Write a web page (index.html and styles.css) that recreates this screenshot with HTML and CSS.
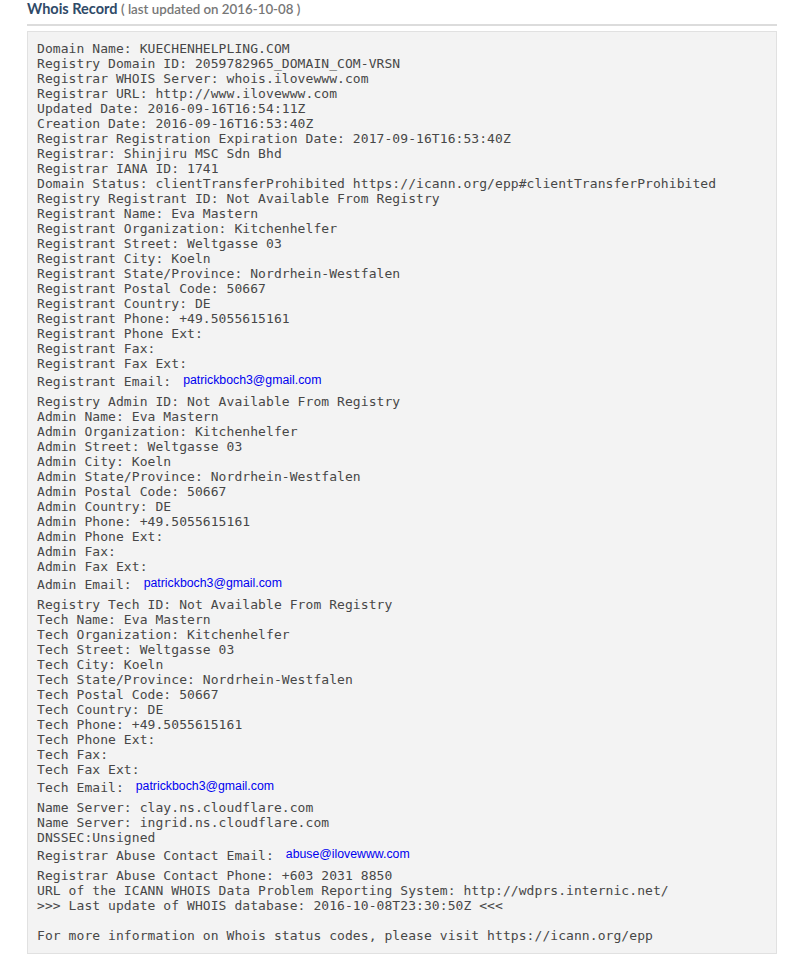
FILE: index.html
```html
<!DOCTYPE html>
<html lang="en">
<head>
  <meta charset="UTF-8">
  <meta name="viewport" content="width=device-width, initial-scale=1.0">
  <title>Whois Record - kuechenhelpling.com</title>
  <link rel="stylesheet" href="styles.css">
</head>
<body>

  <div class="whois-section">
    <h2 class="section-title">Whois Record <small>( last updated on 2016-10-08 )</small></h2>

    <!-- Raw whois output -->
    <pre class="whois-raw">Domain Name: KUECHENHELPLING.COM
Registry Domain ID: 2059782965_DOMAIN_COM-VRSN
Registrar WHOIS Server: whois.ilovewww.com
Registrar URL: http://www.ilovewww.com
Updated Date: 2016-09-16T16:54:11Z
Creation Date: 2016-09-16T16:53:40Z
Registrar Registration Expiration Date: 2017-09-16T16:53:40Z
Registrar: Shinjiru MSC Sdn Bhd
Registrar IANA ID: 1741
Domain Status: clientTransferProhibited https://icann.org/epp#clientTransferProhibited
Registry Registrant ID: Not Available From Registry
Registrant Name: Eva Mastern
Registrant Organization: Kitchenhelfer
Registrant Street: Weltgasse 03
Registrant City: Koeln
Registrant State/Province: Nordrhein-Westfalen
Registrant Postal Code: 50667
Registrant Country: DE
Registrant Phone: +49.5055615161
Registrant Phone Ext:
Registrant Fax:
Registrant Fax Ext:
Registrant Email: <span class="email">patrickboch3@gmail.com</span>
Registry Admin ID: Not Available From Registry
Admin Name: Eva Mastern
Admin Organization: Kitchenhelfer
Admin Street: Weltgasse 03
Admin City: Koeln
Admin State/Province: Nordrhein-Westfalen
Admin Postal Code: 50667
Admin Country: DE
Admin Phone: +49.5055615161
Admin Phone Ext:
Admin Fax:
Admin Fax Ext:
Admin Email: <span class="email">patrickboch3@gmail.com</span>
Registry Tech ID: Not Available From Registry
Tech Name: Eva Mastern
Tech Organization: Kitchenhelfer
Tech Street: Weltgasse 03
Tech City: Koeln
Tech State/Province: Nordrhein-Westfalen
Tech Postal Code: 50667
Tech Country: DE
Tech Phone: +49.5055615161
Tech Phone Ext:
Tech Fax:
Tech Fax Ext:
Tech Email: <span class="email">patrickboch3@gmail.com</span>
Name Server: clay.ns.cloudflare.com
Name Server: ingrid.ns.cloudflare.com
DNSSEC:Unsigned
Registrar Abuse Contact Email: <span class="email">abuse@ilovewww.com</span>
Registrar Abuse Contact Phone: +603 2031 8850
URL of the ICANN WHOIS Data Problem Reporting System: http://wdprs.internic.net/
&gt;&gt;&gt; Last update of WHOIS database: 2016-10-08T23:30:50Z &lt;&lt;&lt;

For more information on Whois status codes, please visit https://icann.org/epp</pre>
  </div>

</body>
</html>
```

FILE: styles.css
```css
/* General Reset */
* {
  margin: 0;
  padding: 0;
  box-sizing: border-box;
}

body {
  background: #fff;
  font-family: 'Lato', 'Liberation Sans', sans-serif;
  color: #333;
}

/* Section wrapper */
.whois-section {
  width: 750px;
  margin-left: 27px;
}

/* Title */
.section-title {
  font-size: 14.5px;
  font-weight: bold;
  color: #2f4a68;
  line-height: 18px;
  padding-bottom: 6px;
  border-bottom: 2px solid #dcdcdc;
}

.section-title small {
  font-size: 13.3px;
  font-weight: 600;
  color: #777;
}

/* Raw record box */
.whois-raw {
  margin-top: 5px;
  padding: 9px 9px 10px;
  background: #f3f3f3;
  border: 1px solid #e1e1e1;
  font-family: 'DejaVu Sans Mono', 'Liberation Mono', monospace;
  font-size: 13px;
  line-height: 15px;
  letter-spacing: 0.07px;
  color: #474747;
  white-space: pre;
}

/* Email addresses shown in a proportional font */
.email {
  display: inline-block;
  margin-left: 4px;
  padding: 3px 0 7px;
  vertical-align: 2px;
  font-family: 'Liberation Sans', Arial, sans-serif;
  font-size: 12.3px;
  line-height: 13px;
  letter-spacing: 0;
  color: #0000f0;
}
```
